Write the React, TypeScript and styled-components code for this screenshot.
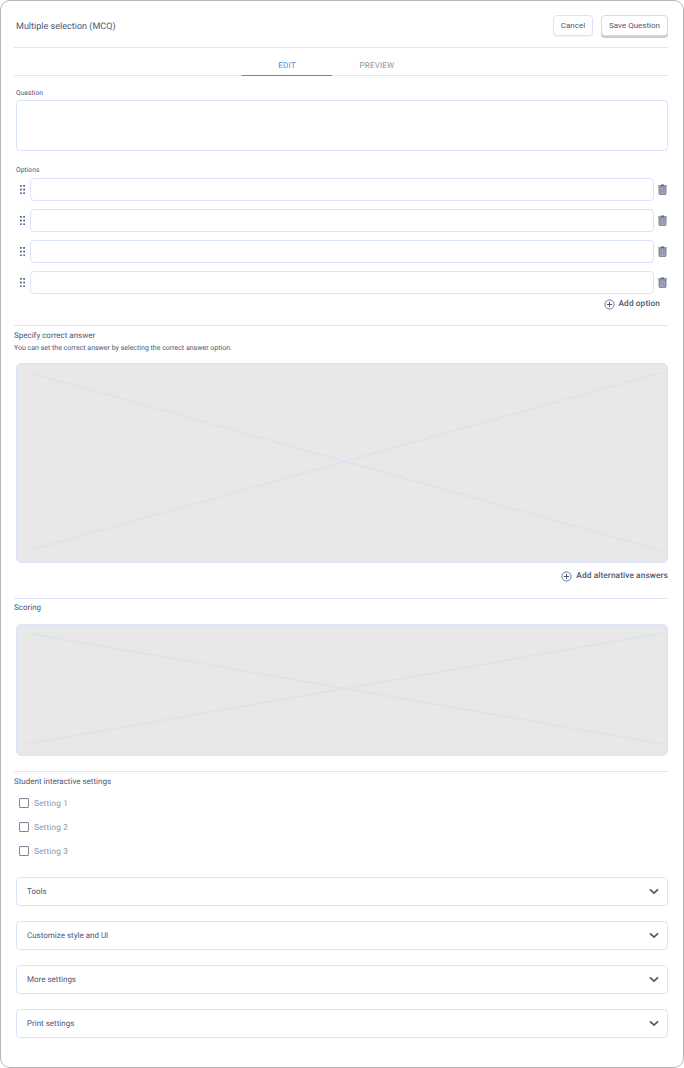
import styled, { createGlobalStyle } from "styled-components";

const GlobalStyle = createGlobalStyle`
  html, body {
    margin: 0;
    padding: 0;
    background: #fff;
  }
  * {
    box-sizing: border-box;
  }
`;

const line = "#dde5f8";
const inputBorder = "#d9e3fb";
const ink = "#4b5878";

const Frame = styled.div`
  width: 684px;
  height: 1068px;
  border: 1px solid #b4b6b8;
  border-radius: 10px;
  padding: 14px 15px 0 13px;
  font-family: Roboto, "Liberation Sans", sans-serif;
  text-rendering: geometricPrecision;
  color: ${ink};
  overflow: hidden;
`;

const Header = styled.div`
  height: 33px;
  display: flex;
  justify-content: space-between;
  align-items: flex-start;
  padding-left: 2px;
  border-bottom: 1px solid ${line};
`;

const Title = styled.div`
  margin-top: 6px;
  font-size: 9px;
  line-height: 12px;
  letter-spacing: 0.02px;
`;

const Actions = styled.div`
  display: flex;
  gap: 8px;
`;

const Button = styled.button<{ $raised?: boolean }>`
  height: 21px;
  padding: 0 7px;
  background: #fff;
  border: 1px solid ${(p) => (p.$raised ? "#d5dbe8" : inputBorder)};
  border-radius: 4px;
  font: inherit;
  font-size: 8px;
  color: ${ink};
  box-shadow: ${(p) => (p.$raised ? "0 2px 0 #c6ccd6" : "0 1px 0 #eef2fc")};
`;

const Tabs = styled.div`
  height: 28px;
  padding-right: 18px;
  display: flex;
  justify-content: center;
  border-bottom: 1px solid ${line};
`;

const Tab = styled.div<{ $active?: boolean }>`
  width: 90px;
  height: 28px;
  display: flex;
  align-items: center;
  justify-content: center;
  padding-top: 7px;
  font-size: 8px;
  letter-spacing: 0.2px;
  color: ${(p) => (p.$active ? "#4a86e0" : "#8b92a5")};
  border-bottom: 1px solid ${(p) => (p.$active ? "#4a8ae8" : "transparent")};
`;

const Field = styled.div`
  padding-left: 2px;
`;

const Label = styled.div<{ $top: number; $bottom: number }>`
  margin-top: ${(p) => p.$top}px;
  height: 10px;
  margin-bottom: ${(p) => p.$bottom}px;
  font-size: 6.8px;
  line-height: 10px;
`;

const TextBox = styled.div`
  height: 51px;
  background: #fff;
  border: 1px solid ${inputBorder};
  border-radius: 4px;
`;

const OptionList = styled.div`
  display: flex;
  flex-direction: column;
  gap: 8px;
`;

const OptionRow = styled.div`
  display: flex;
  align-items: center;
  height: 23px;
`;

const Handle = styled.div`
  width: 14px;
  display: flex;
  justify-content: center;
  padding-right: 2px;
  color: #4b5878;
`;

const OptionInput = styled.div`
  flex: 1;
  height: 23px;
  border: 1px solid ${inputBorder};
  border-radius: 4px;
`;

const Trash = styled.div`
  width: 14px;
  display: flex;
  justify-content: flex-end;
  padding-right: 1px;
  color: #6c7690;
`;

const AddRow = styled.div<{ $right: number; $top: number; $bottom: number }>`
  display: flex;
  justify-content: flex-end;
  align-items: center;
  gap: 4px;
  height: 12px;
  margin-top: ${(p) => p.$top}px;
  margin-bottom: ${(p) => p.$bottom}px;
  padding-right: ${(p) => p.$right}px;
  font-size: 8.3px;
  font-weight: 500;
  letter-spacing: 0.1px;
`;

const Section = styled.div<{ $top?: number }>`
  margin-top: ${(p) => p.$top ?? 0}px;
  border-top: 1px solid ${line};
`;

const SectionTitle = styled.div<{ $top: number }>`
  margin-top: ${(p) => p.$top}px;
  height: 12px;
  font-size: 8px;
  line-height: 12px;
`;

const SectionHint = styled.div`
  margin-top: 1px;
  height: 10px;
  font-size: 7px;
  line-height: 10px;
`;

const Placeholder = styled.div<{ $height: number; $top: number }>`
  height: ${(p) => p.$height}px;
  margin: ${(p) => p.$top}px 0 0 2px;
  padding: 8px 4px 11px 10px;
  background: #e8e8e8;
  border: 1px solid ${inputBorder};
  border-radius: 5px;
`;

const Cross = styled.svg`
  display: block;
  width: 100%;
  height: 100%;
`;

const Checks = styled.div`
  margin-top: 3px;
  padding-left: 5px;
  display: flex;
  flex-direction: column;
`;

const CheckRow = styled.label`
  height: 24px;
  display: flex;
  align-items: center;
  gap: 5px;
  font-size: 8.2px;
  letter-spacing: 0.2px;
  color: #8a92a8;
`;

const CheckText = styled.span`
  padding-top: 1px;
`;

const Box = styled.span`
  width: 10px;
  height: 10px;
  border: 1px solid #7d859b;
  border-radius: 1px;
`;

const Accordions = styled.div`
  margin: 14px 0 0 2px;
  display: flex;
  flex-direction: column;
  gap: 15px;
`;

const Accordion = styled.div`
  height: 29px;
  padding: 0 8px 0 10px;
  display: flex;
  align-items: center;
  justify-content: space-between;
  border: 1px solid ${inputBorder};
  border-radius: 4px;
  font-size: 8px;
`;

const DragIcon = () => (
  <svg width="5" height="9" viewBox="0 0 5 9" fill="currentColor">
    {[0.9, 4.5, 8.1].map((y) =>
      [0.9, 4.1].map((x) => <circle key={`${x}-${y}`} cx={x} cy={y} r="0.95" />),
    )}
  </svg>
);

const TrashIcon = () => (
  <svg width="9" height="11" viewBox="0 0 9 11" fill="none">
    <path d="M3 .5h3l.5 1H9v1H0v-1h2.5z" fill="#59637f" />
    <path d="M1 3h7v6.6c0 .6-.4 1-1 1H2c-.6 0-1-.4-1-1z" fill="#a3aabb" stroke="#59637f" strokeWidth=".7" />
    <path d="M3.2 4.6v4.2M5.8 4.6v4.2" stroke="#6d7690" strokeWidth=".6" />
  </svg>
);

const PlusIcon = () => (
  <svg width="11" height="11" viewBox="0 0 11 11" fill="none" stroke="currentColor">
    <circle cx="5.5" cy="5.5" r="4.6" strokeWidth=".8" />
    <path d="M5.5 2.9v5.2M2.9 5.5h5.2" strokeWidth="1" />
  </svg>
);

const ChevronIcon = () => (
  <svg width="10" height="7" viewBox="0 0 10 7" fill="none" stroke="#4b5878" strokeWidth="1.7">
    <path d="M1 1.4l4 3.8 4-3.8" />
  </svg>
);

const CrossLines = () => (
  <Cross viewBox="0 0 100 100" preserveAspectRatio="none">
    <path
      d="M0 0L100 100M100 0L0 100"
      fill="none"
      stroke="#dadeef"
      strokeWidth="1"
      vectorEffect="non-scaling-stroke"
    />
  </Cross>
);

const options = [1, 2, 3, 4];
const settings = ["Setting 1", "Setting 2", "Setting 3"];
const panels = ["Tools", "Customize style and UI", "More settings", "Print settings"];

export default function App() {
  return (
    <>
      <GlobalStyle />
      <Frame>
        <Header>
          <Title>Multiple selection (MCQ)</Title>
          <Actions>
            <Button>Cancel</Button>
            <Button $raised>Save Question</Button>
          </Actions>
        </Header>
        <Tabs>
          <Tab $active>EDIT</Tab>
          <Tab>PREVIEW</Tab>
        </Tabs>
        <Field>
          <Label $top={12} $bottom={2}>Question</Label>
          <TextBox />
        </Field>
        <Field>
          <Label $top={14} $bottom={3}>Options</Label>
        </Field>
        <OptionList>
          {options.map((id) => (
            <OptionRow key={id}>
              <Field>
                <Handle>
                  <DragIcon />
                </Handle>
              </Field>
              <OptionInput />
              <Trash>
                <TrashIcon />
              </Trash>
            </OptionRow>
          ))}
        </OptionList>
        <AddRow $right={8} $top={4} $bottom={15}>
          <PlusIcon />
          Add option
        </AddRow>
        <Section>
          <SectionTitle $top={4}>Specify correct answer</SectionTitle>
          <SectionHint>You can set the correct answer by selecting the correct answer option.</SectionHint>
          <Placeholder $height={200} $top={10}>
            <CrossLines />
          </Placeholder>
        </Section>
        <AddRow $right={0} $top={7} $bottom={16}>
          <PlusIcon />
          Add alternative answers
        </AddRow>
        <Section>
          <SectionTitle $top={3}>Scoring</SectionTitle>
          <Placeholder $height={132} $top={10}>
            <CrossLines />
          </Placeholder>
        </Section>
        <Section $top={15}>
          <SectionTitle $top={4}>Student interactive settings</SectionTitle>
          <Checks>
            {settings.map((name) => (
              <CheckRow key={name}>
                <Box />
                <CheckText>{name}</CheckText>
              </CheckRow>
            ))}
          </Checks>
        </Section>
        <Accordions>
          {panels.map((name) => (
            <Accordion key={name}>
              {name}
              <ChevronIcon />
            </Accordion>
          ))}
        </Accordions>
      </Frame>
    </>
  );
}
